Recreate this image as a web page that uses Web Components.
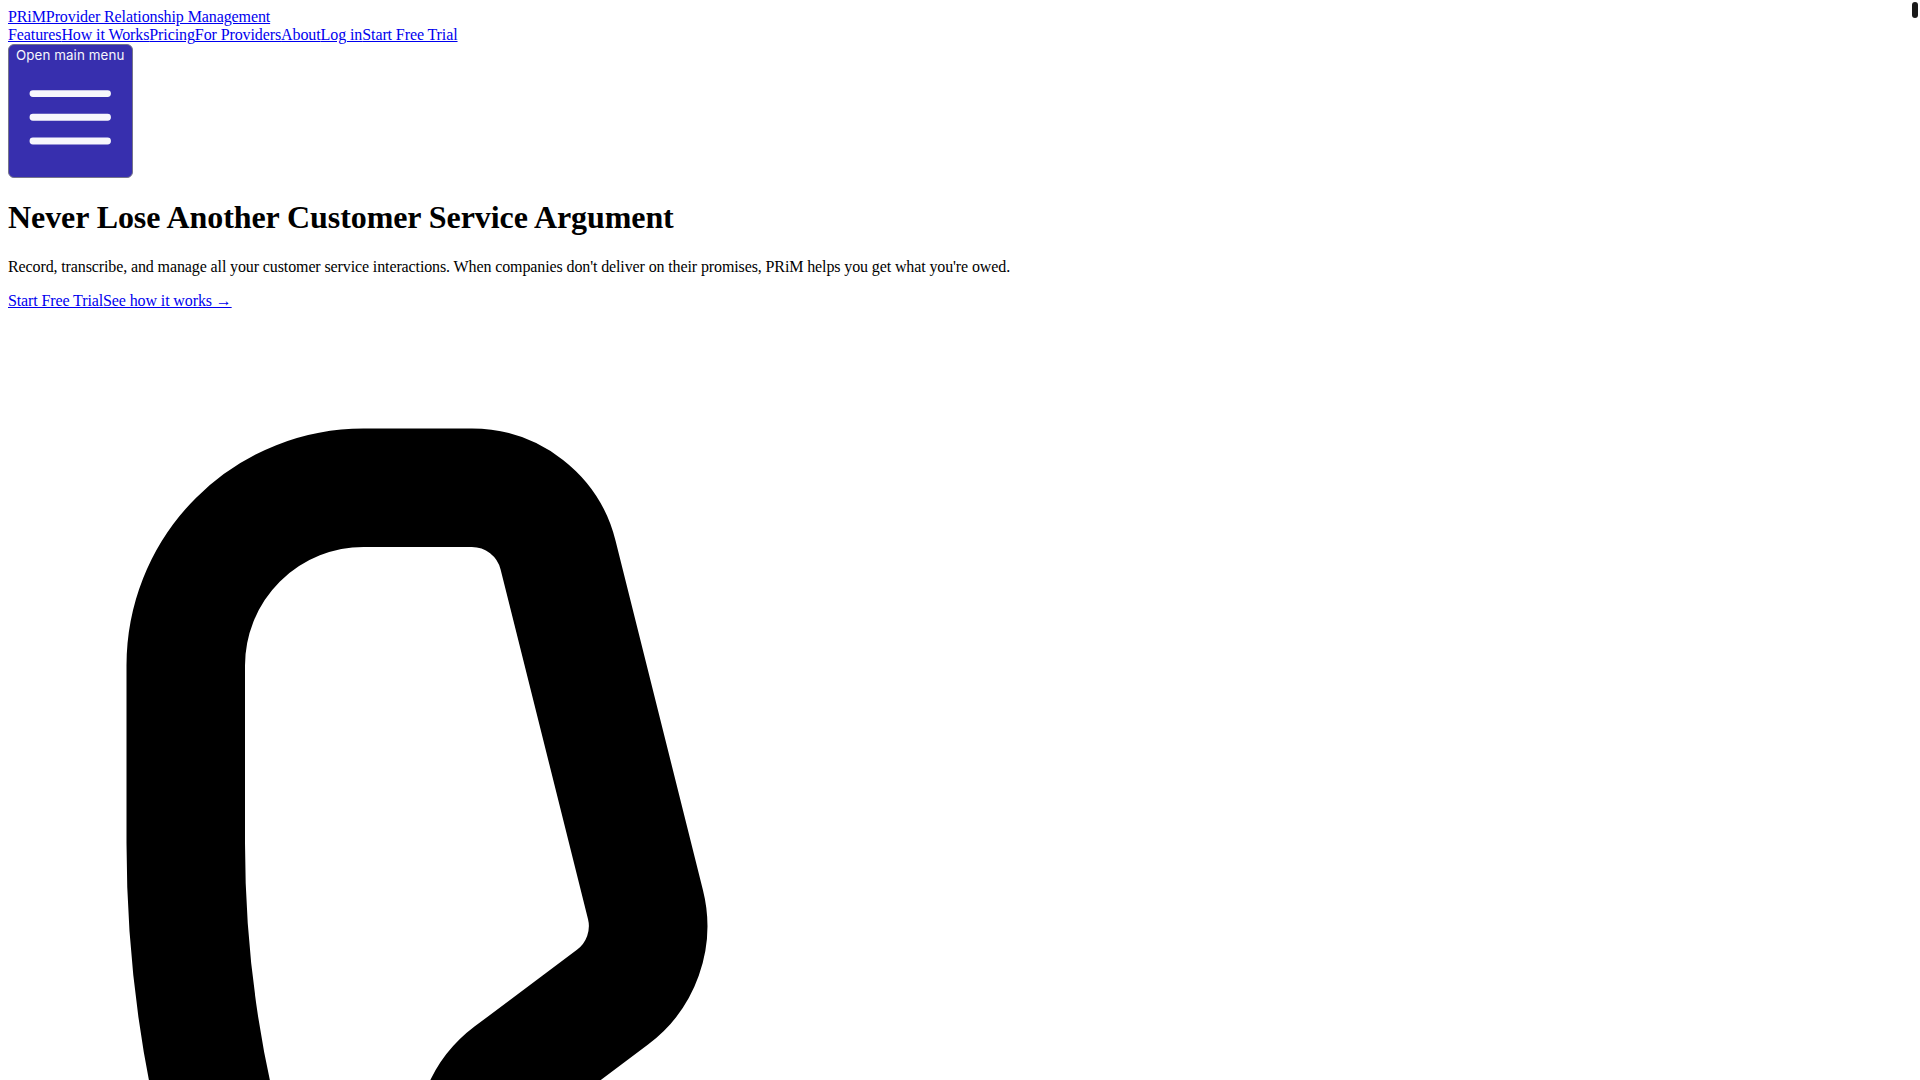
<!DOCTYPE html>
<html lang="en">
<head>
<meta charset="utf-8">
<title>PRiM</title>
<style>
html, body { height: 100%; overflow: hidden; }
body { margin: 8px; background: #fff; font-family: "Liberation Serif", serif; font-size: 16px; color: #000; }
</style>
</head>
<body>
<site-nav></site-nav>
<hero-block></hero-block>
<page-scrollthumb></page-scrollthumb>

<script>
class SiteNav extends HTMLElement {
    connectedCallback() {
        const shadow = this.attachShadow({ mode: "open" });
        shadow.innerHTML = `
          <style>
          :host { display: block; letter-spacing: -0.1px; }
          a { color: #0000ee; }
          button {
              display: block;
              padding: 2px 7px;
              border: 1px solid #76758a;
              border-radius: 6px;
              background: #372fae;
              color: #f7f7fc;
              font: 13.333px Inter, sans-serif;
              letter-spacing: 0.1px;
              text-align: left;
          }
          span { display: block; white-space: nowrap; }
          svg { width: 108.5px; height: 108.5px; }
          </style>
          <div><a href="#">PRiM</a><a href="#">Provider Relationship Management</a></div>
          <div><a href="#">Features</a><a href="#">How it Works</a><a href="#">Pricing</a><a href="#">For Providers</a><a href="#">About</a><a href="#">Log in</a><a href="#">Start Free Trial</a></div>
          <button type="button">
            <span>Open main menu</span>
            <svg viewBox="0 0 24 24" fill="none" stroke="currentColor" stroke-width="1.5">
              <path stroke-linecap="round" stroke-linejoin="round" d="M3.75 6.75h16.5M3.75 12h16.5m-16.5 5.25h16.5"/>
            </svg>
          </button>
        `;
    }
}

class HeroBlock extends HTMLElement {
    connectedCallback() {
        const shadow = this.attachShadow({ mode: "open" });
        shadow.innerHTML = `
          <style>
          :host { display: block; letter-spacing: -0.115px; }
          h1 { margin: 21.44px 0 22.2px; font-size: 32px; letter-spacing: -0.08px; }
          p { margin: 16px 0; }
          a { color: #0000ee; }
          svg { display: block; width: 1896px; height: 1896px; }
          </style>
          <h1>Never Lose Another Customer Service Argument</h1>
          <p>Record, transcribe, and manage all your customer service interactions. When companies don't deliver on their promises, PRiM helps you get what you're owed.</p>
          <div><a href="#">Start Free Trial</a><a href="#">See how it works →</a></div>
          <svg viewBox="0 0 24 24" fill="none" stroke="currentColor" stroke-width="1.5">
            <path stroke-linecap="round" stroke-linejoin="round" d="M2.25 6.75c0 8.284 6.716 15 15 15h2.25a2.25 2.25 0 002.25-2.25v-1.372c0-.516-.351-.966-.852-1.091l-4.423-1.106c-.44-.11-.902.055-1.173.417l-.97 1.293c-.282.376-.769.542-1.21.38a12.035 12.035 0 01-7.143-7.143c-.162-.441.004-.928.38-1.21l1.293-.97c.363-.271.527-.734.417-1.173L6.963 3.102a1.125 1.125 0 00-1.091-.852H4.5A2.25 2.25 0 002.25 4.5v2.25z"/>
          </svg>
        `;
    }
}

class PageScrollthumb extends HTMLElement {
    connectedCallback() {
        const shadow = this.attachShadow({ mode: "open" });
        shadow.innerHTML = `
          <style>
          :host {
              position: fixed;
              top: 2px;
              right: 2px;
              width: 6px;
              height: 16px;
              border-radius: 3px;
              background: #1a1a1a;
          }
          </style>
        `;
    }
}

customElements.define("site-nav", SiteNav);
customElements.define("hero-block", HeroBlock);
customElements.define("page-scrollthumb", PageScrollthumb);
</script>
</body>
</html>
